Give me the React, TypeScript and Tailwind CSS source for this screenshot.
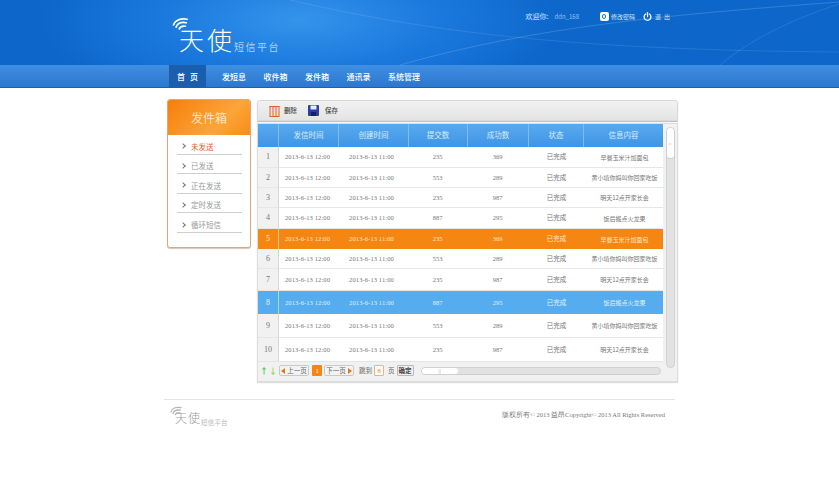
const font = "font-['Noto_Sans_CJK_SC','Liberation_Sans',sans-serif]";

const rows = [
  { n: 1, h: 'h-[21px]', a: '235', b: '369', msg: '早餐玉米汁加面包' },
  { n: 2, h: 'h-[20px]', a: '553', b: '289', msg: '黄小埴你妈叫你回家吃饭' },
  { n: 3, h: 'h-[20px]', a: '235', b: '987', msg: '明天12点开家长会' },
  { n: 4, h: 'h-[21px]', a: '887', b: '295', msg: '饭后搬点火龙果' },
  { n: 5, h: 'h-[20px]', a: '235', b: '369', msg: '早餐玉米汁加面包', tone: 'orange' },
  { n: 6, h: 'h-[20px]', a: '553', b: '289', msg: '黄小埴你妈叫你回家吃饭' },
  { n: 7, h: 'h-[22px]', a: '235', b: '987', msg: '明天12点开家长会' },
  { n: 8, h: 'h-[23px]', a: '887', b: '295', msg: '饭后搬点火龙果', tone: 'blue' },
  { n: 9, h: 'h-[24px]', a: '553', b: '289', msg: '黄小埴你妈叫你回家吃饭' },
  { n: 10, h: 'h-[24px]', a: '235', b: '987', msg: '明天12点开家长会' }
];

const navItems = ['发短息', '收件箱', '发件箱', '通讯录', '系统管理'];
const sideItems = ['未发送', '已发送', '正在发送', '定时发送', '循环短信'];
const cols = 'grid grid-cols-[21px_60px_70px_59px_61px_55px_79px]';

function Logo({ small }: { small?: boolean }): JSX.Element {
  if (small) {
    return (
      <div className="relative h-[24px] w-[60px] text-[#9a9a9a]">
        <svg className="absolute left-0 top-0" width="13" height="11" viewBox="0 0 20 17" fill="none" stroke="#b5b5b5" strokeWidth="2" strokeLinecap="round">
          <path d="M1.5 9 C3 4 9 1 17 2.5" />
          <path d="M4.5 11.5 C6 7.5 10.5 5.5 16 6.5" />
          <path d="M8 13.5 C9 11.5 11.5 10 15 10.5" />
        </svg>
        <span className="absolute left-[5px] top-[2px] text-[12px] font-light leading-[20px] tracking-[1px] whitespace-nowrap">天使</span>
        <span className="absolute left-[31px] top-[11px] text-[6.5px] leading-[10px] tracking-[0.2px] text-[#bbbbbb] whitespace-nowrap">短信平台</span>
      </div>
    );
  }
  return (
    <div className="relative h-[40px] w-[110px] text-white">
      <svg className="absolute left-0 top-0" width="18" height="15" viewBox="0 0 20 17" fill="none" stroke="#ffffff" strokeWidth="1.9" strokeLinecap="round">
        <path d="M1.5 9 C3 4 9 1 17 2.5" />
        <path d="M4.5 11.5 C6 7.5 10.5 5.5 16 6.5" />
        <path d="M8 13.5 C9 11.5 11.5 10 15 10.5" />
      </svg>
      <span className="absolute left-[7px] top-[2px] text-[25px] font-extralight leading-[40px] tracking-[3px] whitespace-nowrap">天使</span>
      <span className="absolute left-[62px] top-[23px] text-[10px] leading-[14px] tracking-[1.5px] text-[#a9d0f5] whitespace-nowrap">短信平台</span>
    </div>
  );
}

function PageButton({ label, left }: { label: string; left?: boolean }): JSX.Element {
  return (
    <button type="button" className="flex h-[11px] w-[30px] items-center justify-center gap-[2px] rounded-[2px] border border-[#c9c9c9] bg-[#f3f3f3] text-[6.5px] leading-none whitespace-nowrap text-[#666666]">
      {left && <span className="h-0 w-0 border-y-[3px] border-r-[4px] border-y-transparent border-r-[#e47a14]" />}
      <span>{label}</span>
      {!left && <span className="h-0 w-0 border-y-[3px] border-l-[4px] border-y-transparent border-l-[#e47a14]" />}
    </button>
  );
}

export default function App(): JSX.Element {
  return (
    <div className={`h-[500px] w-[839px] overflow-hidden bg-white ${font}`}>
      <header className="relative h-[65px] overflow-hidden bg-[radial-gradient(ellipse_260px_90px_at_300px_20px,#3494ec_0%,#1a78dc_55%,#0d67cb_100%)]">
        <svg className="absolute inset-0" width="839" height="65" fill="none">
          <path d="M290 0 C420 30 560 50 839 52" stroke="#ffffff" strokeOpacity="0.1" />
          <path d="M400 65 C540 25 680 14 839 2" stroke="#ffffff" strokeOpacity="0.16" />
          <path d="M720 65 C750 40 790 20 839 4" stroke="#ffffff" strokeOpacity="0.1" />
        </svg>
        <div className="relative flex items-start pl-[172px]">
          <div className="pt-[17px]">
            <Logo />
          </div>
          <div className="ml-auto mr-[166px] flex items-center pt-[11px] text-[6px] leading-[11px] whitespace-nowrap text-[#cfe6fb]">
            <span className="text-[7px]">欢迎你:</span>
            <span className="ml-[6px] text-[#8fc1ee]">ddn_168</span>
            <span className="ml-[21px] flex h-[9px] w-[9px] items-center justify-center rounded-[2px] bg-white">
              <span className="h-[5px] w-[4px] rounded-full border border-[#1a78dc]" />
            </span>
            <span className="ml-[2px]">修改密码</span>
            <svg className="ml-[8px]" width="9" height="9" viewBox="0 0 10 10" fill="none" stroke="#ffffff" strokeWidth="1.4" strokeLinecap="round">
              <path d="M3 2.2 A3.8 3.8 0 1 0 7 2.2" />
              <path d="M5 0.8 V5" />
            </svg>
            <span className="ml-[3px] tracking-[3px]">退出</span>
          </div>
        </div>
      </header>

      <nav className="flex h-[23px] items-stretch bg-[linear-gradient(#3f8fe2,#2b76cf)] pl-[169px] text-[8px] font-medium text-white shadow-[inset_0_-1px_0_#1c5fb3]">
        <a className="flex w-[37px] items-center justify-center gap-[5px] bg-[#1a5ead]">
          <span>首</span>
          <span>页</span>
        </a>
        <div className="ml-[16px] flex items-center gap-[17.5px]">
          {navItems.map((item) => (
            <a key={item} className="whitespace-nowrap">{item}</a>
          ))}
        </div>
      </nav>

      <main className="flex items-start gap-[6px] pl-[167px] pt-[11px]">
        <aside className="h-[149px] w-[84px] overflow-hidden rounded-[3px] border border-[#e0a878] bg-white shadow-[0_1px_1px_#d9c6b5]">
          <div className="flex h-[35px] items-center justify-center bg-[linear-gradient(135deg,#f67f0a,#fca53a_65%,#f78c14)] text-[12px] text-[#fde4c4]">发件箱</div>
          <ul className="pl-[9px] pr-[8px]">
            {sideItems.map((item, i) => (
              <li key={item} className="flex h-[19.6px] items-center gap-[6px] border-b border-[#cfcfcf] pl-[4px] pt-[4px] text-[7.5px] text-[#999999]">
                <span className="h-[4px] w-[4px] rotate-45 border-r border-t border-[#777777]" />
                <span className={i === 0 ? 'text-[#e8601c]' : ''}>{item}</span>
              </li>
            ))}
          </ul>
        </aside>

        <section className="mt-[1px] w-[421px]">
          <div className="flex h-[21px] items-center rounded-t-[3px] border border-[#d9d9d9] bg-[linear-gradient(#f2f2f2,#e4e4e4)] pl-[11px] text-[6.5px] font-medium text-[#444444] shadow-[0_1px_1px_#bbbbbb]">
            <svg width="11" height="12" viewBox="0 0 11 12" fill="none" stroke="#d9622b" strokeWidth="1">
              <path d="M0.5 1.5 H10.5" />
              <rect x="1" y="1.5" width="9" height="10" fill="#f8e4d6" />
              <path d="M4 2 V11 M7 2 V11" />
            </svg>
            <span className="ml-[4px]">删除</span>
            <svg className="ml-[11px]" width="11" height="11" viewBox="0 0 11 11">
              <rect width="11" height="11" rx="1" fill="#2c3f9f" />
              <rect x="2.5" y="0.5" width="6" height="4" fill="#e8ecf8" />
              <rect x="3" y="7" width="5" height="4" fill="#12206b" />
            </svg>
            <span className="ml-[6px]">保存</span>
          </div>

          <div className="mt-[2px] flex h-[259px] flex-col border border-[#dddddd] bg-[#f1f1f1] shadow-[0_1px_1px_#dddddd]">
            <div className="flex min-h-0 flex-1">
              <div className="w-[405px]">
                <div className={`${cols} h-[23px] bg-[linear-gradient(#58a9ee,#3f95e6)] text-center text-[7.5px] leading-[22px] text-[#d8ecfc]`}>
                  <div className="border-r border-[#7dbcf0]" />
                  {['发信时间', '创建时间', '提交数', '成功数', '状态', '信息内容'].map((title, i) => (
                    <div key={title} className={i < 5 ? 'border-r border-[#7dbcf0]' : ''}>{title}</div>
                  ))}
                </div>
                {rows.map((row) => {
                  const rowTone =
                    row.tone === 'orange'
                      ? 'bg-[#f58612] text-[#fde6c8]'
                      : row.tone === 'blue'
                        ? 'bg-[#55acee] text-[#e0f0fc]'
                        : 'bg-white text-[#777777] border-b border-[#e6e6e6]';
                  const indexTone = row.tone ? 'border-r border-white/50' : 'bg-[#f1f1f1] text-[#777777] border-r border-[#d6d6d6]';
                  return (
                    <div key={row.n} className={`${cols} ${row.h} ${rowTone} items-stretch text-center text-[6.5px]`}>
                      <div className={`flex items-center justify-center text-[8px] font-['Liberation_Serif',serif] ${indexTone}`}>{row.n}</div>
                      <div className="flex items-center justify-center whitespace-nowrap pr-[3px] tracking-[0.1px] font-['Liberation_Serif',serif]">2013-6-13 12:00</div>
                      <div className="flex items-center justify-center whitespace-nowrap pr-[5px] tracking-[0.1px] font-['Liberation_Serif',serif]">2013-6-13 11:00</div>
                      <div className="flex items-center justify-center pr-[2px] font-['Liberation_Serif',serif]">{row.a}</div>
                      <div className="flex items-center justify-center pr-[2px] font-['Liberation_Serif',serif]">{row.b}</div>
                      <div className="flex items-center justify-center text-[6.5px]">已完成</div>
                      <div className="flex items-center justify-center whitespace-nowrap pl-[2px] text-[6px]">{row.msg}</div>
                    </div>
                  );
                })}
              </div>
              <div className="flex flex-1 justify-center pt-[3px]">
                <div className="flex h-[241px] w-[9px] rounded-[5px] border border-[#d0d0d0] bg-[#e2e2e2]">
                  <div className="flex h-[31px] w-full items-center justify-center rounded-[4px] border-b border-[#cccccc] bg-white text-[5px] leading-none text-[#aaaaaa]">=</div>
                </div>
              </div>
            </div>
            <div className="flex h-[21px] items-center pl-[2px] text-[6.5px] whitespace-nowrap text-[#666666]">
              <span className="text-[8px] leading-none font-bold text-[#5cc24a]">↑</span>
              <span className="ml-[1px] text-[8px] leading-none font-bold text-[#9ad44a]">↓</span>
              <span className="ml-[2px]"><PageButton label="上一页" left /></span>
              <span className="ml-[3px] flex h-[11px] w-[10px] items-center justify-center rounded-[1px] bg-[#f58612] text-white font-['Liberation_Serif',serif]">1</span>
              <span className="ml-[2px]"><PageButton label="下一页" /></span>
              <span className="ml-[5px]">跳到</span>
              <span className="ml-[2px] flex h-[11px] w-[10px] items-center justify-center rounded-[1px] border border-[#f0b37a] bg-white text-[#e47a14] font-['Liberation_Serif',serif]">8</span>
              <span className="ml-[4px]">页</span>
              <button type="button" className="ml-[2px] h-[11px] w-[17px] rounded-[1px] border border-[#bbbbbb] bg-[#efefef] text-[6.5px] leading-none font-bold text-[#444444]">确定</button>
              <div className="ml-[7px] flex h-[8px] w-[240px] items-center rounded-[4px] border border-[#d0d0d0] bg-[#e2e2e2]">
                <div className="flex h-full w-[36px] items-center justify-center rounded-[4px] bg-white text-[5px] leading-none text-[#aaaaaa]">||</div>
              </div>
            </div>
          </div>
        </section>
      </main>

      <footer className="mx-[164px] mt-[17px] flex justify-between border-t border-[#e4e4e4] pl-[6px] pr-[10px] pt-[6px]">
        <Logo small />
        <p className="mt-[4px] font-['Liberation_Serif',serif] text-[6.5px] leading-[10px] text-[#777777] whitespace-nowrap">版权所有© 2013 益昂Copyright© 2013 All Rights Reserved</p>
      </footer>
    </div>
  );
}
